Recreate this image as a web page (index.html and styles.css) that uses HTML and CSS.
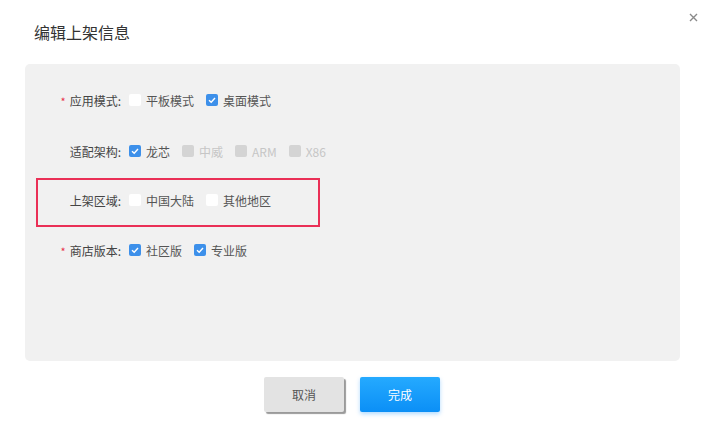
FILE: index.html
```html
<!DOCTYPE html>
<html lang="zh-CN">
<head>
<meta charset="utf-8">
<title>编辑上架信息</title>
<link rel="stylesheet" href="styles.css">
</head>
<body>
<div class="dialog">
  <header class="head">
    <h1 class="title">编辑上架信息</h1>
    <span class="close" aria-label="关闭">
      <svg width="9" height="9" viewBox="0 0 9 9"><path d="M1 1L8 8M8 1L1 8" stroke="#8a8a8a" stroke-width="1.4" fill="none"/></svg>
    </span>
  </header>
  <section class="panel">
    <div class="row">
      <span class="label"><i class="req">*</i>应用模式:</span>
      <div class="opts">
        <label class="opt"><span class="box"></span>平板模式</label>
        <label class="opt"><span class="box on"><svg viewBox="0 0 12 12"><path d="M3 6.2L5.2 8.3L9 4" stroke="#fff" stroke-width="1.4" fill="none"/></svg></span>桌面模式</label>
      </div>
    </div>
    <div class="row">
      <span class="label">适配架构:</span>
      <div class="opts">
        <label class="opt"><span class="box on"><svg viewBox="0 0 12 12"><path d="M3 6.2L5.2 8.3L9 4" stroke="#fff" stroke-width="1.4" fill="none"/></svg></span>龙芯</label>
        <label class="opt dis"><span class="box"></span>中威</label>
        <label class="opt dis"><span class="box"></span>ARM</label>
        <label class="opt dis"><span class="box"></span>X86</label>
      </div>
    </div>
    <div class="row marked">
      <span class="label">上架区域:</span>
      <div class="opts">
        <label class="opt"><span class="box"></span>中国大陆</label>
        <label class="opt"><span class="box"></span>其他地区</label>
      </div>
    </div>
    <div class="row">
      <span class="label"><i class="req">*</i>商店版本:</span>
      <div class="opts">
        <label class="opt"><span class="box on"><svg viewBox="0 0 12 12"><path d="M3 6.2L5.2 8.3L9 4" stroke="#fff" stroke-width="1.4" fill="none"/></svg></span>社区版</label>
        <label class="opt"><span class="box on"><svg viewBox="0 0 12 12"><path d="M3 6.2L5.2 8.3L9 4" stroke="#fff" stroke-width="1.4" fill="none"/></svg></span>专业版</label>
      </div>
    </div>
  </section>
  <footer class="foot">
    <button class="btn cancel">取消</button>
    <button class="btn ok">完成</button>
  </footer>
</div>
</body>
</html>
```
FILE: styles.css
```css
* { box-sizing: border-box; }
html, body { margin: 0; padding: 0; background: #fff; }
body {
  font-family: "Noto Sans CJK SC", "Noto Sans", "Liberation Sans", sans-serif;
  color: #333;
  font-size: 12px;
}
.dialog { width: 710px; height: 435px; }
.head {
  height: 64px;
  display: flex;
  justify-content: space-between;
  align-items: flex-start;
  padding: 0 12px 0 34px;
}
.title {
  margin: 21px 0 0;
  font-size: 16px;
  font-weight: 400;
  line-height: 22px;
  color: #333;
}
.close { margin-top: 13px; display: flex; }
.panel {
  margin: 0 30px 0 25px;
  height: 297px;
  background: #f1f1f1;
  border-radius: 5px;
  padding-top: 11px;
}
.row {
  height: 50px;
  display: flex;
  align-items: center;
  position: relative;
}
.row:nth-child(2) { padding-top: 2px; }
.row.marked::after {
  content: "";
  position: absolute;
  left: 11px;
  top: 3px;
  width: 280px;
  height: 45px;
  border: 2px solid #ea2f56;
}
.label {
  width: 97px;
  text-align: right;
  color: #444;
  padding-right: 1px;
  white-space: nowrap;
}
.req {
  font-style: normal;
  color: #e8334a;
  margin-right: 4px;
  font-size: 11px;
}
.opts {
  display: flex;
  gap: 12px;
  margin-left: 7px;
}
.opt {
  display: flex;
  align-items: center;
  gap: 5px;
  color: #555;
}
.box {
  width: 12px;
  height: 12px;
  background: #fff;
  border-radius: 2px;
  display: flex;
}
.box svg { width: 12px; height: 12px; }
.box.on { background: #3d90ea; }
.opt.dis { color: #c6c6c6; }
.opt.dis .box { background: #d4d4d4; }
.foot {
  display: flex;
  justify-content: center;
  gap: 16px;
  padding-top: 16px;
  padding-right: 6px;
}
.btn {
  width: 80px;
  height: 35px;
  border: none;
  border-radius: 2px;
  font-family: inherit;
  font-size: 12px;
}
.cancel {
  background: #e3e3e3;
  color: #555;
  box-shadow: 2px 2px 1px #9a9a9a;
}
.ok {
  background: linear-gradient(#25aaff, #0b8ff6);
  color: #fff;
  box-shadow: 0 2px 4px rgba(30, 150, 255, 0.35);
}
```
